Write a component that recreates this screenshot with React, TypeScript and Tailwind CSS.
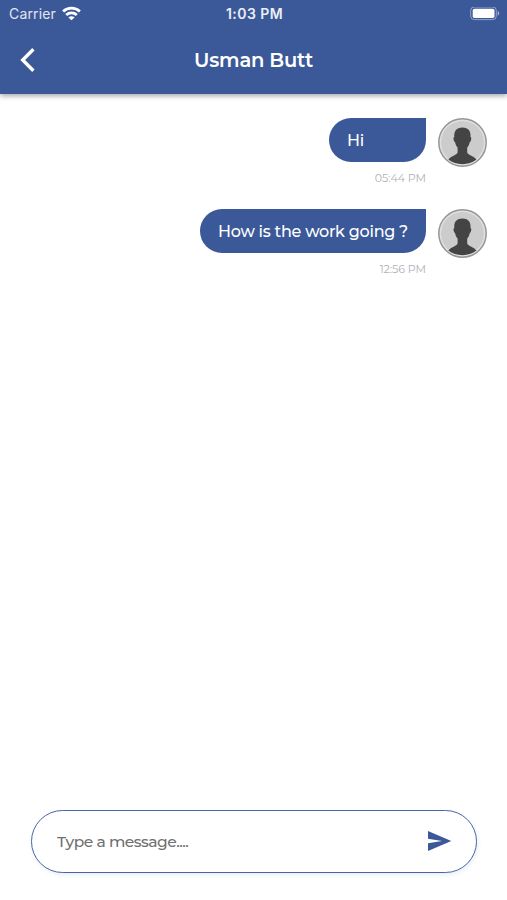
import { useState } from "react";

type Message = {
  id: number;
  text: string;
  time: string;
};

const messages: Message[] = [
  { id: 1, text: "Hi", time: "05:44 PM" },
  { id: 2, text: "How is the work going ?", time: "12:56 PM" },
];

function StatusBar() {
  return (
    <div className="grid h-7 grid-cols-3 items-center pr-[7px] pl-[9px] font-['Inter',sans-serif] text-[14px] leading-none">
      <div className="flex items-center gap-[6px]">
        <span className="w-[47px] tracking-[0.15px] whitespace-nowrap text-white/85">Carrier</span>
        <svg className="-mt-px h-[15px] w-[19px]" viewBox="0 0 19 14" fill="none" stroke="white" strokeWidth="2.7">
          <path d="M1.1 4.9C5.8.4 13.2.4 17.9 4.9" />
          <path d="M4.2 8.4c3-2.8 7.6-2.8 10.6 0" />
          <path d="M9.5 13.8 6.4 10.9c1.8-1.6 4.4-1.6 6.2 0z" fill="white" stroke="none" />
        </svg>
      </div>
      <span className="text-center font-semibold tracking-[0.45px] text-white/90">1:03 PM</span>
      <svg className="h-[14px] w-[30px] justify-self-end" viewBox="0 0 30 14">
        <rect x="0.7" y="0" width="25.6" height="12.6" rx="3.5" fill="none" stroke="white" strokeOpacity="0.45" />
        <rect x="2.7" y="1.7" width="21.8" height="9.3" rx="1.8" fill="white" />
        <path d="M27.7 4.1c2.1.8 2.1 3.8 0 4.6z" fill="white" fillOpacity="0.5" />
      </svg>
    </div>
  );
}

function Avatar() {
  return (
    <svg className="size-[49px] shrink-0" viewBox="0 0 49 49">
      <circle cx="24.5" cy="24.5" r="23.7" fill="#e0e0e0" stroke="#969696" strokeWidth="1.5" />
      <circle cx="24.5" cy="24.5" r="21.5" fill="#cccccc" />
      <path
        d="M24.4 9.4c-6 0-8.6 3.6-8.1 9.5-1.3.2-.9 4 .8 5.4.4 2.3 1.2 4 2.5 5.3v4.8c-1 2.5-6.7 3.6-9.3 7.1 7.6 6.2 20.6 6.2 28.2 0-2.6-3.5-8.3-4.6-9.3-7.1v-4.8c1.3-1.3 2.1-3 2.5-5.3 1.7-1.4 2.1-5.2.8-5.4.5-5.9-2.1-9.5-8.1-9.5z"
        fill="#444"
      />
    </svg>
  );
}

function MessageRow({ message }: { message: Message }) {
  return (
    <div className="flex h-[67px] items-start justify-end gap-3">
      <div className="flex flex-col items-end">
        <div className="flex h-11 min-w-[97px] items-center rounded-[22px] rounded-tr-none bg-[#3b5998] px-[18px] pt-px text-[16px] font-medium tracking-[-0.26px] whitespace-nowrap text-white">
          {message.text}
        </div>
        <span className="mt-2 text-[11px] leading-4 tracking-[-0.04px] text-[#b0b0b6]">{message.time}</span>
      </div>
      <Avatar />
    </div>
  );
}

export default function App() {
  const [draft, setDraft] = useState("");

  return (
    <main className="flex h-[900px] w-full flex-col bg-white font-['Montserrat','Inter',sans-serif]">
      <header className="h-[94px] shrink-0 bg-[#3b5998] text-white shadow-[0_2px_5px_rgba(0,0,0,0.35)]">
        <StatusBar />
        <div className="grid h-16 grid-cols-[60px_1fr_60px] items-center">
          <button type="button" aria-label="Back" className="pl-5">
            <svg className="h-6 w-[15px]" viewBox="0 0 15 24" fill="none" stroke="white" strokeWidth="3.4">
              <path d="M13.4 1.2 2.7 12l10.7 10.8" />
            </svg>
          </button>
          <h1 className="pt-0.5 text-center text-[19.5px] font-semibold tracking-[-0.2px]">Usman Butt</h1>
        </div>
      </header>

      <section className="flex flex-1 flex-col gap-6 pt-6 pr-5">
        {messages.map((message) => (
          <MessageRow key={message.id} message={message} />
        ))}
      </section>

      <form
        className="mr-[30px] mb-[27px] ml-[31px] flex h-[63px] shrink-0 items-center rounded-full border-[1.5px] border-[#4866a5] bg-white pr-6 pl-[25px] shadow-[1px_2px_4px_rgba(59,89,152,0.1)]"
        onSubmit={(event) => event.preventDefault()}
      >
        <input
          className="min-w-0 flex-1 text-[15.5px] font-medium tracking-[-0.5px] text-[#444] outline-none placeholder:text-[#707070]"
          placeholder="Type a message...."
          value={draft}
          onChange={(event) => setDraft(event.target.value)}
        />
        <button type="submit" aria-label="Send" className="pb-px">
          <svg className="h-5 w-6" viewBox="0 0 24 20" fill="#3b5998">
            <path d="M0 0 23.3 10 0 20v-7.7L14 10 0 7.7z" />
          </svg>
        </button>
      </form>
    </main>
  );
}
